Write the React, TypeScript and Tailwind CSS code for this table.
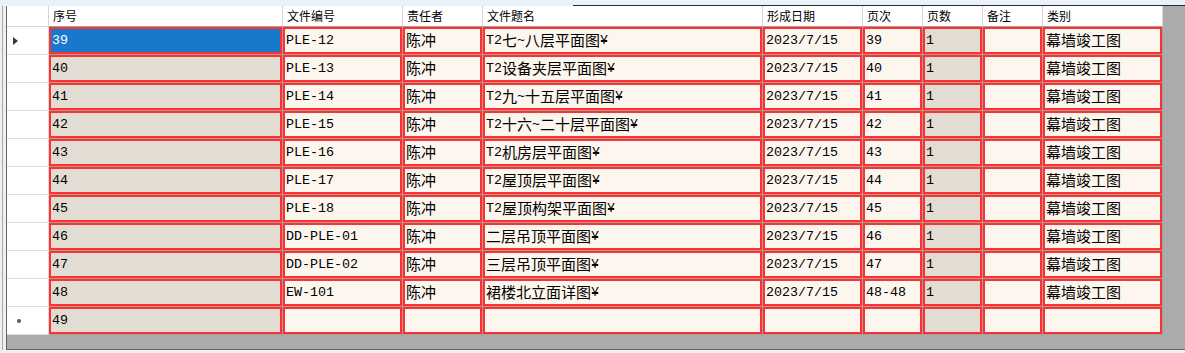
import React from 'react';
import clsx from 'clsx';

type Col = { title: string; w: number; readOnly?: boolean };

const COLS: Col[] = [
  { title: '序号', w: 234, readOnly: true },
  { title: '文件编号', w: 120 },
  { title: '责任者', w: 80 },
  { title: '文件题名', w: 280 },
  { title: '形成日期', w: 100 },
  { title: '页次', w: 60 },
  { title: '页数', w: 60, readOnly: true },
  { title: '备注', w: 60 },
  { title: '类别', w: 120 },
];

const ROWS: string[][] = [
  ['39', 'PLE-12', '陈冲', 'T2七~八层平面图¥', '2023/7/15', '39', '1', '', '幕墙竣工图'],
  ['40', 'PLE-13', '陈冲', 'T2设备夹层平面图¥', '2023/7/15', '40', '1', '', '幕墙竣工图'],
  ['41', 'PLE-14', '陈冲', 'T2九~十五层平面图¥', '2023/7/15', '41', '1', '', '幕墙竣工图'],
  ['42', 'PLE-15', '陈冲', 'T2十六~二十层平面图¥', '2023/7/15', '42', '1', '', '幕墙竣工图'],
  ['43', 'PLE-16', '陈冲', 'T2机房层平面图¥', '2023/7/15', '43', '1', '', '幕墙竣工图'],
  ['44', 'PLE-17', '陈冲', 'T2屋顶层平面图¥', '2023/7/15', '44', '1', '', '幕墙竣工图'],
  ['45', 'PLE-18', '陈冲', 'T2屋顶构架平面图¥', '2023/7/15', '45', '1', '', '幕墙竣工图'],
  ['46', 'DD-PLE-01', '陈冲', '二层吊顶平面图¥', '2023/7/15', '46', '1', '', '幕墙竣工图'],
  ['47', 'DD-PLE-02', '陈冲', '三层吊顶平面图¥', '2023/7/15', '47', '1', '', '幕墙竣工图'],
  ['48', 'EW-101', '陈冲', '裙楼北立面详图¥', '2023/7/15', '48-48', '1', '', '幕墙竣工图'],
  ['49', '', '', '', '', '', '', '', ''],
];

// SimSun-ish: half-width latin, wider CJK glyphs
function CellText({ text }: { text: string }) {
  const parts = text.split(/([\u3000-\u9fff\uff00-\uffef]+)/);
  return (
    <>
      {parts.map((p, i) =>
        i % 2 ? (
          <span key={i} className="text-[15px] font-['Noto_Sans_CJK_SC',sans-serif]">
            {p}
          </span>
        ) : (
          <span key={i}>{p}</span>
        )
      )}
    </>
  );
}

function RowHeader({ mark }: { mark?: 'current' | 'new' }) {
  return (
    <div className="w-[42px] h-[28px] shrink-0 bg-white border-r border-b border-[#dcdcdc] flex items-center">
      {mark === 'current' && (
        <svg width="5" height="8" viewBox="0 0 5 8" className="ml-[6px]">
          <polygon points="0,0 5,4 0,8" fill="#3a3a3a" />
        </svg>
      )}
      {mark === 'new' && <div className="ml-[10px] w-[4px] h-[4px] rounded-full bg-[#5a5a5a]" />}
    </div>
  );
}

export default function App() {
  return (
    <div className="w-[1185px] h-[353px] bg-[#f0f0f0] overflow-hidden flex flex-col">
      <div className="h-[6px] flex shrink-0 bg-[#e9f2fb]">
        <div className="w-[573px]" />
        <div className="flex-1 border-b border-[#2d2d2d]" />
      </div>
      <div className="flex h-[344px] shrink-0">
        <div className="w-[3px] border-r border-[#a8a8a8]" />
        <div className="w-[3px]" />
        <div className="flex-1 border-l border-b border-[#646464] bg-[#ababab] flex flex-col">
          {/* column headers */}
          <div className="flex h-[21px] shrink-0">
            <div className="w-[42px] shrink-0 bg-white border-r border-b border-[#d5d5d5]" />
            {COLS.map((c) => (
              <div
                key={c.title}
                className="shrink-0 bg-white border-r border-[#d5d5d5] border-b border-b-[#a0a0a0] flex items-center pl-[4px] text-[12px] text-black font-['Noto_Sans_CJK_SC',sans-serif]"
                style={{ width: c.w }}
              >
                {c.title}
              </div>
            ))}
          </div>

          {ROWS.map((row, r) => (
            <div key={r} className="flex h-[28px] shrink-0">
              <RowHeader mark={r === 0 ? 'current' : r === ROWS.length - 1 ? 'new' : undefined} />
              {COLS.map((c, ci) => {
                const selected = r === 0 && ci === 0;
                return (
                  <div
                    key={c.title}
                    className="shrink-0 h-[28px] border-r border-b border-[#a0a0a0]"
                    style={{ width: c.w }}
                  >
                    <div
                      className={clsx(
                        "h-full border-2 border-[#ff3030] flex items-center pl-[1px] overflow-hidden whitespace-nowrap text-[13.33px] font-['Liberation_Mono',monospace]",
                        selected
                          ? 'bg-[#1878cb] text-white'
                          : c.readOnly
                          ? 'bg-[#e2dcd3] text-black'
                          : 'bg-[#fdf6ee] text-black'
                      )}
                    >
                      <CellText text={row[ci]} />
                    </div>
                  </div>
                );
              })}
            </div>
          ))}
        </div>
      </div>
    </div>
  );
}
